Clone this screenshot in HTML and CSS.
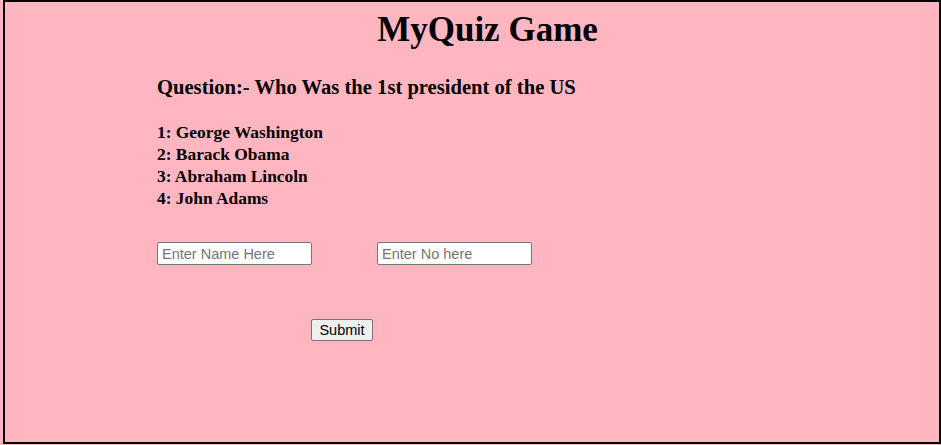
FILE: index.html
```html
<!DOCTYPE html>
<html lang="en">
<head>
<meta charset="utf-8">
<title>MyQuiz Game</title>
<link rel="stylesheet" href="styles.css">
</head>
<body>
<div class="frame">
  <h1 class="title">MyQuiz Game</h1>
  <div class="content">
    <h3 class="question">Question:- Who Was the 1st president of the US</h3>
    <div class="options">
      <div>1: George Washington</div>
      <div>2: Barack Obama</div>
      <div>3: Abraham Lincoln</div>
      <div>4: John Adams</div>
    </div>
    <div class="fields">
      <input class="field" type="text" placeholder="Enter Name Here">
      <input class="field" type="text" placeholder="Enter No here">
    </div>
    <div class="actions">
      <button class="submit" type="button">Submit</button>
    </div>
  </div>
</div>
</body>
</html>
```

FILE: styles.css
```css
html {
  background: #ffb6c1;
}
body {
  margin: 0;
  background: #ffb6c1;
  font-family: "Liberation Serif", "Times New Roman", serif;
  color: #000;
  overflow: hidden;
}
.frame {
  box-sizing: border-box;
  margin-left: 3px;
  width: 938px;
  height: 444px;
  border: 2px solid #000;
  padding-top: 8px;
}
.title {
  margin: 0;
  padding-left: 31px;
  text-align: center;
  font-size: 35px;
  line-height: 40px;
  font-weight: bold;
}
.content {
  padding-left: 152px;
}
.question {
  margin: 25px 0 0;
  font-size: 20.6px;
  line-height: 24px;
  font-weight: bold;
}
.options {
  margin-top: 22px;
  font-size: 17.4px;
  line-height: 22px;
  font-weight: bold;
}
.fields {
  margin-top: 33px;
  display: flex;
  gap: 65px;
}
.field {
  box-sizing: border-box;
  width: 155px;
  height: 23px;
  margin: 0;
  padding: 1px 4px;
  border: 1px solid #767676;
  border-radius: 2px;
  background: #fff;
  font-family: "Liberation Sans", Arial, sans-serif;
  font-size: 14.5px;
  color: #000;
}
.field::placeholder {
  color: #757575;
}
.actions {
  margin-top: 54px;
  padding-left: 154px;
}
.submit {
  box-sizing: border-box;
  width: 62px;
  height: 22px;
  margin: 0;
  padding: 0;
  border: 1px solid #767676;
  border-radius: 2px;
  background: #efefef;
  font-family: "Liberation Sans", Arial, sans-serif;
  font-size: 14.5px;
  color: #000;
}
```
